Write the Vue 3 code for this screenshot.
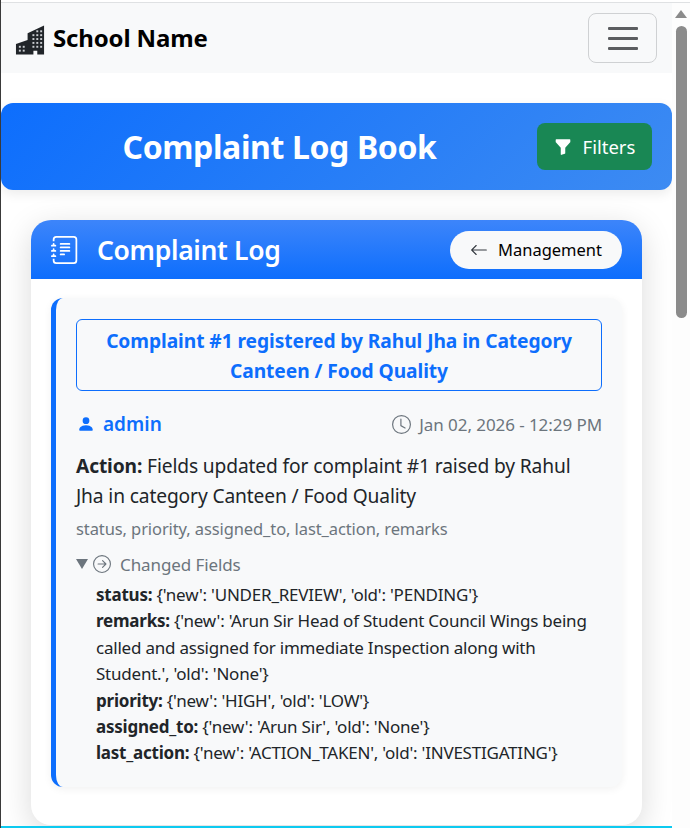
<template>
  <div class="page">
    <div class="top-line"></div>
    <div class="content">
      <nav class="navbar">
        <div class="brand">
          <svg class="brand-icon" viewBox="0 0 16 16" fill="#212529">
            <path d="M15 .5v15h-3.5V13.5h-2V15.5H.5V10L6.5 8V4.500z" />
            <g fill="#c9ccd0">
              <rect v-for="w in buildingWindows" :key="w.x + '-' + w.y" :x="w.x" :y="w.y" width="1" height="1" />
            </g>
          </svg>
          <span>School Name</span>
        </div>
        <button class="toggler">
          <span></span><span></span><span></span>
        </button>
      </nav>

      <header class="hero">
        <h1>Complaint Log Book</h1>
        <button class="filters-btn">
          <svg viewBox="0 0 16 16" fill="currentColor" width="18" height="18">
            <path d="M1.5 1.5A.5.5 0 0 1 2 1h12a.5.5 0 0 1 .5.5v2a.5.5 0 0 1-.128.334L10 8.692V13.5a.5.5 0 0 1-.342.474l-3 1A.5.5 0 0 1 6 14.5V8.692L1.628 3.834A.5.5 0 0 1 1.5 3.5z" />
          </svg>
          Filters
        </button>
      </header>

      <section class="log-card">
        <div class="log-head">
          <div class="log-title">
            <svg viewBox="0 0 16 16" fill="currentColor" width="28" height="28">
              <path d="M5 10.5a.5.5 0 0 1 .5-.5h2a.5.5 0 0 1 0 1h-2a.5.5 0 0 1-.5-.5m0-2a.5.5 0 0 1 .5-.5h5a.5.5 0 0 1 0 1h-5a.5.5 0 0 1-.5-.5m0-2a.5.5 0 0 1 .5-.5h5a.5.5 0 0 1 0 1h-5a.5.5 0 0 1-.5-.5m0-2a.5.5 0 0 1 .5-.5h5a.5.5 0 0 1 0 1h-5a.5.5 0 0 1-.5-.5" />
              <path d="M3 0h10a2 2 0 0 1 2 2v12a2 2 0 0 1-2 2H3a2 2 0 0 1-2-2v-1h1v1a1 1 0 0 0 1 1h10a1 1 0 0 0 1-1V2a1 1 0 0 0-1-1H3a1 1 0 0 0-1 1v1H1V2a2 2 0 0 1 2-2" />
              <path d="M1 5v-.5a.5.5 0 0 1 1 0V5h.5a.5.5 0 0 1 0 1h-2a.5.5 0 0 1 0-1zm0 3v-.5a.5.5 0 0 1 1 0V8h.5a.5.5 0 0 1 0 1h-2a.5.5 0 0 1 0-1zm0 3v-.5a.5.5 0 0 1 1 0v.5h.5a.5.5 0 0 1 0 1h-2a.5.5 0 0 1 0-1z" />
            </svg>
            <h2>Complaint Log</h2>
          </div>
          <button class="back-btn">
            <svg viewBox="0 0 16 16" fill="currentColor" width="18" height="18">
              <path fill-rule="evenodd" d="M15 8a.5.5 0 0 0-.5-.5H2.707l3.147-3.146a.5.5 0 1 0-.708-.708l-4 4a.5.5 0 0 0 0 .708l4 4a.5.5 0 0 0 .708-.708L2.707 8.5H14.5A.5.5 0 0 0 15 8" />
            </svg>
            Management
          </button>
        </div>

        <div class="log-body">
          <article class="entry">
            <div class="entry-title">Complaint #1 registered by Rahul Jha in Category Canteen / Food Quality</div>

            <div class="entry-meta">
              <span class="entry-user">
                <svg viewBox="0 0 16 16" fill="currentColor" width="18" height="18">
                  <path d="M3 14s-1 0-1-1 1-4 6-4 6 3 6 4-1 1-1 1zm5-6a3 3 0 1 0 0-6 3 3 0 0 0 0 6" />
                </svg>
                admin
              </span>
              <span class="entry-time">
                <svg viewBox="0 0 16 16" fill="currentColor" width="19" height="19">
                  <path d="M8 3.5a.5.5 0 0 0-1 0V9a.5.5 0 0 0 .252.434l3.5 2a.5.5 0 0 0 .496-.868L8 8.71z" />
                  <path d="M8 16A8 8 0 1 0 8 0a8 8 0 0 0 0 16m7-8A7 7 0 1 1 1 8a7 7 0 0 1 14 0" />
                </svg>
                Jan 02, 2026 - 12:29 PM
              </span>
            </div>

            <p class="entry-action"><strong>Action:</strong> Fields updated for complaint #1 raised by Rahul Jha in category Canteen / Food Quality</p>
            <p class="entry-fields">status, priority, assigned_to, last_action, remarks</p>

            <div class="changes">
              <div class="changes-toggle">
                <span class="caret"></span>
                <svg viewBox="0 0 16 16" fill="currentColor" width="18" height="18">
                  <path fill-rule="evenodd" d="M1 8a7 7 0 1 0 14 0A7 7 0 0 0 1 8m15 0A8 8 0 1 1 0 8a8 8 0 0 1 16 0M4.5 7.5a.5.5 0 0 0 0 1h5.793l-2.147 2.146a.5.5 0 0 0 .708.708l3-3a.5.5 0 0 0 0-.708l-3-3a.5.5 0 1 0-.708.708L10.293 7.5z" />
                </svg>
                Changed Fields
              </div>
              <ul class="changes-list">
                <li v-for="c in changes" :key="c.field"><strong>{{ c.field }}:</strong> {{ c.value }}</li>
              </ul>
            </div>
          </article>
        </div>
      </section>
    </div>

    <div class="bottom-line"></div>

    <div class="scrollbar">
      <span class="scroll-up"></span>
      <span class="scroll-thumb"></span>
    </div>
  </div>
</template>

<script setup>
const changes = [
  { field: 'status', value: "{'new': 'UNDER_REVIEW', 'old': 'PENDING'}" },
  { field: 'remarks', value: "{'new': 'Arun Sir Head of Student Council Wings being called and assigned for immediate Inspection along with Student.', 'old': 'None'}" },
  { field: 'priority', value: "{'new': 'HIGH', 'old': 'LOW'}" },
  { field: 'assigned_to', value: "{'new': 'Arun Sir', 'old': 'None'}" },
  { field: 'last_action', value: "{'new': 'ACTION_TAKEN', 'old': 'INVESTIGATING'}" }
]

// little lit windows on the building logo
const buildingWindows = []
for (let y = 3; y <= 11; y += 2) {
  for (let x = 9; x <= 13; x += 2) {
    if (y < 5 && x < 11) continue
    buildingWindows.push({ x, y })
  }
}
for (const x of [2, 4]) {
  for (const y of [11, 13]) buildingWindows.push({ x, y })
}
</script>

<style>
html, body { margin: 0; padding: 0; background: #fff; overflow: hidden; }
</style>

<style scoped>
.page {
  position: relative;
  width: 690px;
  height: 828px;
  overflow: hidden;
  background: #fff;
  font-family: "Noto Sans", "Open Sans", sans-serif;
  color: #212529;
  box-sizing: border-box;
  padding-top: 3px;
  border-left: 1px solid #3a3a3a;
}
.top-line { position: absolute; top: 2px; left: 0; right: 0; height: 1px; background: #dfe1e3; }
.content { width: 671px; }

/* navbar */
.navbar {
  height: 70px;
  background: #f8f9fa;
  display: flex;
  align-items: center;
  justify-content: space-between;
  padding: 0 15px;
  box-sizing: border-box;
}
.brand {
  display: flex;
  align-items: center;
  gap: 7px;
  font-size: 24px;
  font-weight: 700;
  color: #000;
  letter-spacing: -0.15px;
}
.brand span { margin-top: -2px; }
.brand-icon { width: 31px; height: 32px; margin-top: 3px; margin-left: -1px; }
.toggler {
  width: 69px;
  height: 50px;
  padding: 0;
  border: 1px solid #cfd1d3;
  border-radius: 8px;
  background: transparent;
  display: flex;
  flex-direction: column;
  align-items: center;
  justify-content: center;
  gap: 7px;
}
.toggler span { display: block; width: 30px; height: 3px; background: #5b5d60; border-radius: 1px; }

/* hero */
.hero {
  margin-top: 30px;
  height: 87px;
  border-radius: 12px;
  background: linear-gradient(135deg, #0d6efd, #3d8bf2);
  box-shadow: 0 4px 12px rgba(0,0,0,0.08);
  display: flex;
  align-items: center;
  padding: 0 20px 0 21px;
  box-sizing: border-box;
  color: #fff;
}
.hero h1 { flex: 1; margin: 0; text-align: center; font-size: 32px; font-weight: 700; letter-spacing: -0.38px; }
.filters-btn {
  width: 115px;
  height: 47px;
  border: none;
  border-radius: 8px;
  background: #198754;
  color: #fff;
  font: inherit;
  font-size: 18.5px;
  display: flex;
  align-items: center;
  justify-content: center;
  gap: 11px;
}

/* card */
.log-card {
  margin: 30px 30px 0;
  height: 605px;
  border-radius: 20px;
  background: #fff;
  box-shadow: 0 8px 32px rgba(0,0,0,0.15);
  overflow: hidden;
}
.log-head {
  height: 59px;
  background: linear-gradient(180deg, #3d85fa, #0d6efd);
  display: flex;
  align-items: center;
  justify-content: space-between;
  padding: 0 20px;
  color: #fff;
}
.log-title { display: flex; align-items: center; gap: 18px; }
.log-title h2 { margin: 0; font-size: 26.5px; font-weight: 600; letter-spacing: -0.33px; }
.back-btn {
  width: 172px;
  height: 38px;
  border: none;
  border-radius: 19px;
  background: #f8f9fa;
  color: #000;
  font: inherit;
  font-size: 16.5px;
  display: flex;
  align-items: center;
  justify-content: center;
  gap: 10px;
}
.back-btn svg { color: #343a40; }
.log-body { padding: 19px 20px; }

/* entry */
.entry {
  background: #f8f9fa;
  border-left: 5px solid #0d6efd;
  border-radius: 12px;
  box-shadow: 0 2px 8px rgba(0,0,0,0.06);
  padding: 21px 20px 0;
  height: 489px;
  box-sizing: border-box;
}
.entry-title {
  border: 1px solid #0d6efd;
  border-radius: 6px;
  padding: 6px 12px 4px;
  text-align: center;
  color: #0d6efd;
  font-size: 19.2px;
  font-weight: 700;
  line-height: 30px;
  letter-spacing: -0.07px;
}
.entry-meta {
  display: flex;
  align-items: center;
  justify-content: space-between;
  margin-top: 19px;
  height: 28px;
}
.entry-user { display: flex; align-items: center; gap: 8px; margin-left: 1px; color: #0d6efd; font-size: 19px; font-weight: 600; }
.entry-time { display: flex; align-items: center; gap: 8px; color: #6c757d; font-size: 17px; letter-spacing: -0.07px; }
.entry-action { margin: 13px 0 0; font-size: 19.2px; line-height: 30px; letter-spacing: -0.13px; color: #212529; }
.entry-fields { margin: 6px 0 0; font-size: 16.5px; line-height: 24px; color: #6c757d; letter-spacing: -0.1px; }
.changes { margin-top: 10px; }
.changes-toggle { display: flex; align-items: center; color: #6c757d; font-size: 17px; height: 26px; letter-spacing: -0.1px; }
.changes-toggle svg { margin: 0 9px 0 5px; }
.caret {
  width: 0;
  height: 0;
  border-left: 6px solid transparent;
  border-right: 6px solid transparent;
  border-top: 10px solid #6c757d;
}
.changes-list { list-style: none; margin: 5px 0 0; padding: 0 0 0 20px; font-size: 17px; line-height: 26.4px; letter-spacing: -0.22px; }
.changes-list strong { font-weight: 700; }

.bottom-line { position: absolute; left: 0; width: 671px; bottom: 0; height: 2px; background: #0dcaf0; }

/* the browser's own scrollbar in the shot */
.scrollbar { position: absolute; top: 3px; right: 0; width: 18px; height: 825px; background: #fdfdfd; }
.scroll-up {
  position: absolute;
  top: 7px;
  left: 3px;
  width: 0;
  height: 0;
  border-left: 6px solid transparent;
  border-right: 6px solid transparent;
  border-bottom: 8px solid #8b8b8b;
}
.scroll-thumb { position: absolute; top: 23px; left: 4px; width: 11px; height: 292px; border-radius: 6px; background: #8b8b8b; }
</style>
